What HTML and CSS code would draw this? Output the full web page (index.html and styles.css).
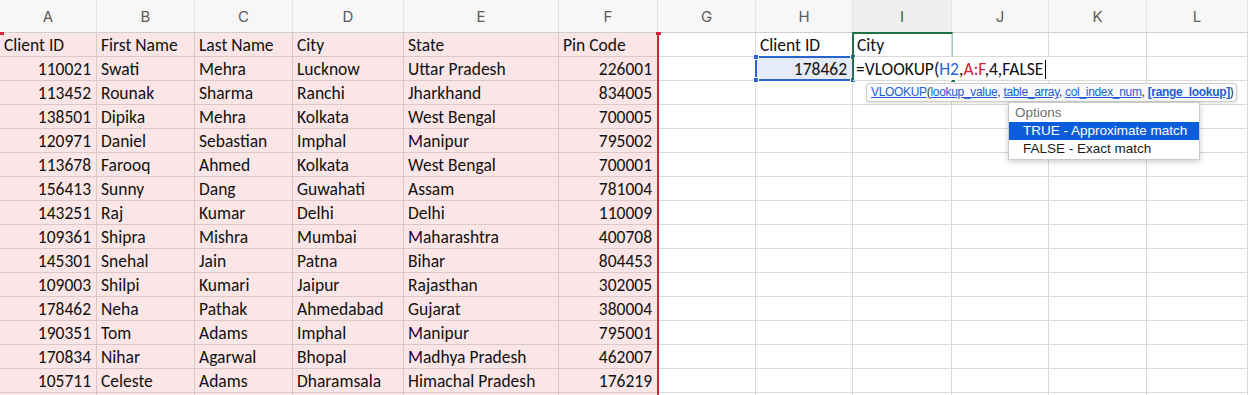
FILE: index.html
```html
<!DOCTYPE html>
<html lang="en">
<head>
  <meta charset="UTF-8">
  <title>Clients - VLOOKUP</title>
  <link rel="stylesheet" href="styles.css">
</head>
<body>
  <div class="sheet">
    <div class="col-heads">
      <div>A</div><div>B</div><div>C</div><div>D</div><div>E</div><div>F</div>
      <div>G</div><div>H</div><div class="active">I</div><div>J</div><div>K</div><div>L</div>
    </div>

    <div class="row">
      <div class="t">Client ID</div><div class="t">First Name</div><div class="t">Last Name</div><div class="t">City</div><div class="t">State</div><div class="t">Pin Code</div>
      <div></div><div>Client ID</div><div>City</div><div></div><div></div><div></div>
    </div>
    <div class="row">
      <div class="t num">110021</div><div class="t">Swati</div><div class="t">Mehra</div><div class="t">Lucknow</div><div class="t">Uttar Pradesh</div><div class="t num">226001</div>
      <div></div><div class="num lookup-key">178462</div>
      <div class="editing">
        <div class="editor">=VLOOKUP(<span class="ref-blue">H2</span>,<span class="ref-red">A:F</span>,4,FALSE<span class="caret"></span></div>
      </div>
      <div></div><div></div><div></div>
    </div>
    <div class="row">
      <div class="t num">113452</div><div class="t">Rounak</div><div class="t">Sharma</div><div class="t">Ranchi</div><div class="t">Jharkhand</div><div class="t num">834005</div>
      <div></div><div></div><div></div><div></div><div></div><div></div>
    </div>
    <div class="row">
      <div class="t num">138501</div><div class="t">Dipika</div><div class="t">Mehra</div><div class="t">Kolkata</div><div class="t">West Bengal</div><div class="t num">700005</div>
      <div></div><div></div><div></div><div></div><div></div><div></div>
    </div>
    <div class="row">
      <div class="t num">120971</div><div class="t">Daniel</div><div class="t">Sebastian</div><div class="t">Imphal</div><div class="t">Manipur</div><div class="t num">795002</div>
      <div></div><div></div><div></div><div></div><div></div><div></div>
    </div>
    <div class="row">
      <div class="t num">113678</div><div class="t">Farooq</div><div class="t">Ahmed</div><div class="t">Kolkata</div><div class="t">West Bengal</div><div class="t num">700001</div>
      <div></div><div></div><div></div><div></div><div></div><div></div>
    </div>
    <div class="row">
      <div class="t num">156413</div><div class="t">Sunny</div><div class="t">Dang</div><div class="t">Guwahati</div><div class="t">Assam</div><div class="t num">781004</div>
      <div></div><div></div><div></div><div></div><div></div><div></div>
    </div>
    <div class="row">
      <div class="t num">143251</div><div class="t">Raj</div><div class="t">Kumar</div><div class="t">Delhi</div><div class="t">Delhi</div><div class="t num">110009</div>
      <div></div><div></div><div></div><div></div><div></div><div></div>
    </div>
    <div class="row">
      <div class="t num">109361</div><div class="t">Shipra</div><div class="t">Mishra</div><div class="t">Mumbai</div><div class="t">Maharashtra</div><div class="t num">400708</div>
      <div></div><div></div><div></div><div></div><div></div><div></div>
    </div>
    <div class="row">
      <div class="t num">145301</div><div class="t">Snehal</div><div class="t">Jain</div><div class="t">Patna</div><div class="t">Bihar</div><div class="t num">804453</div>
      <div></div><div></div><div></div><div></div><div></div><div></div>
    </div>
    <div class="row">
      <div class="t num">109003</div><div class="t">Shilpi</div><div class="t">Kumari</div><div class="t">Jaipur</div><div class="t">Rajasthan</div><div class="t num">302005</div>
      <div></div><div></div><div></div><div></div><div></div><div></div>
    </div>
    <div class="row">
      <div class="t num">178462</div><div class="t">Neha</div><div class="t">Pathak</div><div class="t">Ahmedabad</div><div class="t">Gujarat</div><div class="t num">380004</div>
      <div></div><div></div><div></div><div></div><div></div><div></div>
    </div>
    <div class="row">
      <div class="t num">190351</div><div class="t">Tom</div><div class="t">Adams</div><div class="t">Imphal</div><div class="t">Manipur</div><div class="t num">795001</div>
      <div></div><div></div><div></div><div></div><div></div><div></div>
    </div>
    <div class="row">
      <div class="t num">170834</div><div class="t">Nihar</div><div class="t">Agarwal</div><div class="t">Bhopal</div><div class="t">Madhya Pradesh</div><div class="t num">462007</div>
      <div></div><div></div><div></div><div></div><div></div><div></div>
    </div>
    <div class="row">
      <div class="t num">105711</div><div class="t">Celeste</div><div class="t">Adams</div><div class="t">Dharamsala</div><div class="t">Himachal Pradesh</div><div class="t num">176219</div>
      <div></div><div></div><div></div><div></div><div></div><div></div>
    </div>
    <div class="row">
      <div class="t"></div><div class="t"></div><div class="t"></div><div class="t"></div><div class="t"></div><div class="t"></div>
      <div></div><div></div><div></div><div></div><div></div><div></div>
    </div>

    <!-- overlays: reference outlines, selection, formula hints -->
    <div class="range-ref">
      <span class="grip grip-l"></span><span class="grip grip-r"></span>
    </div>
    <div class="key-ref">
      <span class="dot tl"></span><span class="dot tr"></span><span class="dot bl"></span><span class="dot br"></span>
    </div>
    <div class="active-box"><span class="fill-handle"></span></div>

    <div class="fn-tip">
      <a>VLOOKUP</a>(<a>lookup_value</a>, <a>table_array</a>, <a>col_index_num</a>, <a class="cur">[range_lookup]</a>)
    </div>

    <div class="options">
      <div class="options-title">Options</div>
      <div class="option selected">TRUE - Approximate match</div>
      <div class="option">FALSE - Exact match</div>
    </div>
  </div>
</body>
</html>
```

FILE: styles.css
```css
* {
  margin: 0;
  padding: 0;
  box-sizing: border-box;
}

body {
  background: #ffffff;
  overflow: hidden;
}

.sheet {
  position: relative;
  width: 1248px;
  height: 395px;
  overflow: hidden;
  font-family: Calibri, Carlito, Lato, sans-serif;
  font-size: 17.5px;
  color: #111111;
}

.col-heads,
.row {
  display: grid;
  grid-template-columns: 97px 98px 98px 111px 155px 99px 98px 97px 99px 97px 98px 101px;
}

.col-heads {
  height: 33px;
  background: #f7f7f7;
  border-bottom: 1px solid #cfcfcf;
}

.col-heads div {
  display: flex;
  align-items: center;
  justify-content: center;
  border-right: 1px solid #e2e2e2;
  font-family: Inter, "Liberation Sans", sans-serif;
  font-size: 15px;
  color: #5c5c5c;
}

.col-heads .active {
  color: #1e7145;
  background: #efefef;
}

.row {
  height: 24px;
}

.row > div {
  border-right: 1px solid #dadada;
  border-bottom: 1px solid #dadada;
  padding: 0 4px;
  line-height: 24px;
  white-space: nowrap;
  overflow: hidden;
}

/* the client table A:F is shaded */
.row > .t {
  background: #fbe6e7;
  border-color: #dcc7c9;
}

.row > .num {
  text-align: right;
  padding-right: 5px;
}

.row > .lookup-key {
  background: #e6ecf7;
}

.row > .editing {
  position: relative;
  overflow: visible;
  z-index: 2;
}

.editor {
  position: absolute;
  left: 1px;
  top: 0;
  width: 198px;
  height: 23px;
  padding-left: 2px;
  background: #ffffff;
  line-height: 24px;
}

.ref-blue {
  color: #2b64d0;
}

.ref-red {
  color: #d3223a;
}

.caret {
  display: inline-block;
  width: 1px;
  height: 19px;
  margin-left: 2px;
  vertical-align: -4px;
  background: #000000;
}

.range-ref {
  position: absolute;
  left: -2px;
  top: 33px;
  width: 661px;
  bottom: 0;
  border-left: 2px solid #d3223a;
  border-right: 2px solid #d3223a;
}

.grip {
  position: absolute;
  top: -1px;
  width: 5px;
  height: 3px;
  background: #d3223a;
}

.grip-l {
  left: -1px;
}

.grip-r {
  right: -4px;
}

.key-ref {
  position: absolute;
  left: 755px;
  top: 56px;
  width: 99px;
  height: 25px;
  border: 2px solid #2b64d0;
}

.dot {
  position: absolute;
  width: 6px;
  height: 6px;
  background: #2b64d0;
  border: 1px solid #ffffff;
}

.dot.tl { left: -4px; top: -4px; }
.dot.tr { right: -4px; top: -4px; }
.dot.bl { left: -4px; bottom: -4px; }
.dot.br { right: -4px; bottom: -4px; }

.active-box {
  position: absolute;
  left: 852px;
  top: 32px;
  width: 101px;
  height: 49px;
  border: 2px solid #1e7145;
  border-right-color: #9fd0b3;
  border-right-width: 1px;
  z-index: 1;
}

.fill-handle {
  position: absolute;
  right: -4px;
  bottom: -4px;
  width: 6px;
  height: 6px;
  background: #1e7145;
  border: 1px solid #ffffff;
  z-index: 3;
}

.fn-tip {
  position: absolute;
  left: 866px;
  top: 83px;
  width: 371px;
  height: 19px;
  padding-left: 4px;
  background: #fafafa;
  border: 1px solid #cfcfcf;
  border-radius: 3px;
  box-shadow: 0 1px 3px rgba(0, 0, 0, 0.15);
  font-family: "Liberation Sans", sans-serif;
  font-size: 12px;
  letter-spacing: -0.32px;
  line-height: 17px;
  color: #333333;
  white-space: nowrap;
  z-index: 3;
}

.fn-tip a {
  color: #1c5fd4;
  text-decoration: underline;
}

.fn-tip .cur {
  font-weight: 700;
}

.options {
  position: absolute;
  left: 1008px;
  top: 102px;
  width: 192px;
  height: 58px;
  background: #ffffff;
  border: 1px solid #c9c9c9;
  box-shadow: 0 2px 6px rgba(0, 0, 0, 0.2);
  font-family: "Liberation Sans", sans-serif;
  font-size: 13.5px;
  z-index: 3;
}

.options-title {
  height: 19px;
  line-height: 19px;
  padding-left: 6px;
  color: #6f6f6f;
}

.option {
  height: 18px;
  line-height: 18px;
  padding-left: 14px;
  color: #1a1a1a;
}

.option.selected {
  background: #0b5ddb;
  color: #ffffff;
}
```
